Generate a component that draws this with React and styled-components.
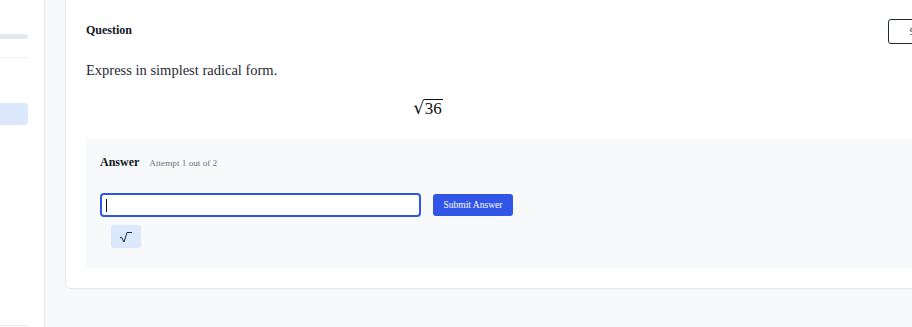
import React from "react";
import styled, { createGlobalStyle } from "styled-components";

const Global = createGlobalStyle`
  html, body { margin: 0; padding: 0; }
  body {
    width: 912px; height: 327px; overflow: hidden;
    background: #f8f9fb;
    font-family: "Liberation Serif", "DejaVu Serif", serif;
    color: #111827;
  }
`;

const Page = styled.div`
  display: flex;
  height: 327px;
  width: 912px;
  overflow: hidden;
`;

const Sidebar = styled.aside`
  flex: 0 0 45px;
  box-sizing: border-box;
  background: #ffffff;
  border-right: 1px solid #e4e6eb;
  padding-right: 16px;
  display: flex;
  flex-direction: column;
`;

const SideBar = styled.div`
  margin-top: ${(p) => p.$mt}px;
  height: ${(p) => p.$h}px;
  background: ${(p) => p.$bg};
  border-radius: 0 ${(p) => p.$r}px ${(p) => p.$r}px 0;
`;

const Spacer = styled.div`
  flex: 1;
`;

const Main = styled.main`
  flex: 1;
  min-width: 0;
  padding: 0 0 0 20px;
`;

const Card = styled.section`
  width: 906px;
  flex-shrink: 0;
  box-sizing: border-box;
  margin-top: -10px;
  height: 299px;
  background: #ffffff;
  border: 1px solid #e4e6eb;
  border-radius: 6px;
  padding: 28px 20px 0 20px;
`;

const Header = styled.div`
  display: flex;
  align-items: center;
  justify-content: space-between;
  height: 25px;
`;

const Title = styled.h2`
  margin: 0 0 2px 0;
  font-size: 12px;
  font-weight: 700;
  color: #111827;
`;

const OutlineButton = styled.button`
  height: 25px;
  width: 62px;
  box-sizing: border-box;
  border: 1px solid #1f2937;
  border-radius: 3px;
  background: #fff;
  font-family: "DejaVu Sans", sans-serif;
  font-size: 9px;
  color: #374151;
  padding: 0;
`;

const Prompt = styled.p`
  margin: 17px 0 0 0;
  font-size: 14.5px;
  color: #1f2937;
  line-height: 18px;
`;

const MathRow = styled.div`
  width: 684px;
  display: flex;
  justify-content: center;
  margin-top: 12px;
  height: 32px;
  align-items: center;
`;

const Radical = styled.span`
  display: inline-flex;
  align-items: flex-end;
  color: #111;
`;

const RadSign = styled.span`
  font-family: "DejaVu Serif", serif;
  font-size: 18px;
  line-height: 21px;
`;

const Radicand = styled.span`
  font-family: "Liberation Serif", serif;
  font-size: 17px;
  border-top: 1px solid #111;
  line-height: 18px;
  padding: 0 1px;
  margin-left: -1px;
`;

const AnswerBox = styled.div`
  margin-top: 16px;
  background: #f8f9fb;
  height: 129px;
  box-sizing: border-box;
  padding: 16px 14px;
`;

const AnswerHead = styled.div`
  display: flex;
  align-items: baseline;
  gap: 10px;
  height: 14px;
`;

const AnswerTitle = styled.span`
  font-size: 12px;
  font-weight: 700;
  color: #111827;
`;

const Attempt = styled.span`
  font-size: 9.2px;
  color: #6b7280;
`;

const InputRow = styled.div`
  display: flex;
  align-items: center;
  gap: 12px;
  margin-top: 24px;
`;

const Field = styled.div`
  width: 321px;
  height: 24px;
  box-sizing: border-box;
  border: 2px solid #2f55e6;
  border-radius: 4px;
  background: #fff;
  display: flex;
  align-items: center;
  padding-left: 4px;
`;

const Caret = styled.span`
  width: 1px;
  height: 13px;
  background: #111;
`;

const Submit = styled.button`
  height: 22px;
  width: 80px;
  border: none;
  border-radius: 3px;
  background: #3155e6;
  color: #fff;
  font-family: inherit;
  font-size: 9.5px;
  padding: 0;
`;

const ToolButton = styled.button`
  margin: 8px 0 0 11px;
  width: 30px;
  height: 23px;
  border: none;
  border-radius: 3px;
  background: #dce8fc;
  display: flex;
  align-items: center;
  justify-content: center;
  padding: 0;
`;

export default function App() {
  return (
    <>
      <Global />
      <Page>
        <Sidebar>
          <SideBar $mt={34} $h={5} $bg="#e3e7ee" $r={3} />
          <SideBar $mt={18} $h={1} $bg="#eef0f3" $r={0} />
          <SideBar $mt={45} $h={22} $bg="#dce8fc" $r={4} />
          <Spacer />
          <SideBar $mt={0} $h={1} $bg="#e9ebef" $r={0} />
          <SideBar $mt={0} $h={1} $bg="transparent" $r={0} />
        </Sidebar>
        <Main>
          <Card>
            <Header>
              <Title>Question</Title>
              <OutlineButton>Skip</OutlineButton>
            </Header>
            <Prompt>Express in simplest radical form.</Prompt>
            <MathRow>
              <Radical>
                <RadSign>√</RadSign>
                <Radicand>36</Radicand>
              </Radical>
            </MathRow>
            <AnswerBox>
              <AnswerHead>
                <AnswerTitle>Answer</AnswerTitle>
                <Attempt>Attempt 1 out of 2</Attempt>
              </AnswerHead>
              <InputRow>
                <Field>
                  <Caret />
                </Field>
                <Submit>Submit Answer</Submit>
              </InputRow>
              <ToolButton aria-label="square root">
                <svg width="14" height="12" viewBox="0 0 14 12" fill="none" stroke="#1e293b" strokeWidth="1">
                  <path d="M1 7 L2.5 6.2 L5 11 L8 1.5 L13 1.5" />
                </svg>
              </ToolButton>
            </AnswerBox>
          </Card>
        </Main>
      </Page>
    </>
  );
}
